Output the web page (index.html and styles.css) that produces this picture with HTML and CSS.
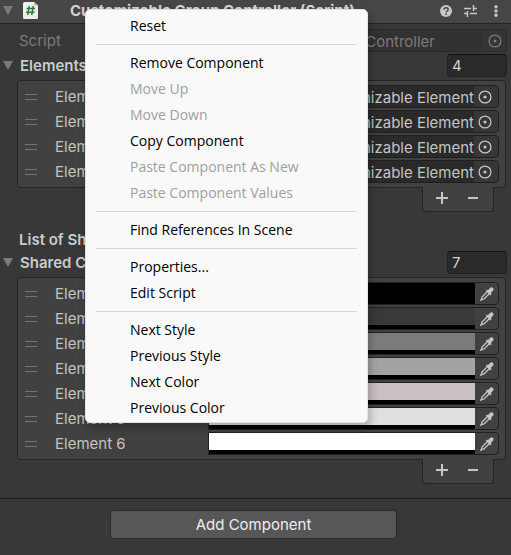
FILE: index.html
```html
<!DOCTYPE html>
<html lang="en">
<head>
<meta charset="utf-8">
<title>Inspector</title>
<link rel="stylesheet" href="styles.css">
</head>
<body>
<svg class="defs" aria-hidden="true">
  <symbol id="fold" viewBox="0 0 10 9"><path d="M0 0h10L5 9z" fill="#7b7b7b"/></symbol>
  <symbol id="grip" viewBox="0 0 12 6"><path d="M0 .5h12M0 5.500h12" stroke="#747474"/></symbol>
  <symbol id="target" viewBox="0 0 14 14"><circle cx="7" cy="7" r="5.900" fill="none" stroke="currentColor" stroke-width="1.300"/><circle cx="7" cy="7" r="1.600" fill="currentColor"/></symbol>
  <symbol id="dropper" viewBox="0 0 14 14"><path d="M7.800 3.300l2.200-2.200C11 .2 12.200.1 13 .9s.8 2-.1 2.900l-2.100 2.200.9.900-1.500 1.500-4.500-4.600L7.100 2.400z" fill="#c6c6c6"/><path d="M7 5L2 10l-.6 2.600L4 12l5-5" fill="none" stroke="#c6c6c6" stroke-width="1.300"/><path d="M0 14l.4-2 1.600 1.600z" fill="#c6c6c6"/></symbol>
  <symbol id="plus" viewBox="0 0 12 12"><path d="M0 6h12M6 0v12" stroke="#c6c6c6" stroke-width="2"/></symbol>
  <symbol id="minus" viewBox="0 0 12 12"><path d="M1 6h10" stroke="#c6c6c6" stroke-width="2"/></symbol>
</svg>
<main class="inspector">
  <header class="head">
    <svg class="fold"><use href="#fold"/></svg>
    <svg class="script-icon" viewBox="0 0 15 17"><path d="M1.500 0H11l4 3.500v12a1.500 1.500 0 0 1-1.500 1.500h-12A1.500 1.500 0 0 1 0 15.500v-14A1.500 1.500 0 0 1 1.500 0z" fill="#eee"/><path d="M11 0v3.500h4z" fill="#bbb"/><path d="M6.300 4L4.700 13M10.300 4L8.700 13M3.500 6.600h8.500M3 10.300h8.500" stroke="#2f7a35" stroke-width="1.500"/></svg>
    <h1 class="title">Customizable Group Controller (Script)</h1>
    <div class="tools">
      <button class="tool" aria-label="Help"><svg class="help" viewBox="0 0 12 12"><circle cx="6" cy="6" r="6" fill="#c8c8c8"/><path d="M4 4.700C4 2 8.200 2.200 8.200 4.500 8.200 6 6.200 6 6.200 7.600" fill="none" stroke="#444" stroke-width="1.400"/><rect x="5.400" y="8.500" width="1.500" height="1.500" fill="#444"/></svg></button>
      <button class="tool" aria-label="Presets"><svg class="preset" viewBox="0 0 13 12"><path d="M0 3.500h7M10 3.500h3M9.500 0v6M0 8.500h3M6 8.500h7M3.500 6v6" stroke="#c8c8c8" stroke-width="1.500" fill="none"/></svg></button>
      <button class="tool" aria-label="More"><svg class="more" viewBox="0 0 4 12"><circle cx="2" cy="1.700" r="1.700"/><circle cx="2" cy="6" r="1.700"/><circle cx="2" cy="10.300" r="1.700"/></svg></button>
    </div>
  </header>

  <div class="script-row">
    <span class="script-label">Script</span>
    <div class="object dim"><span class="object-name">CustomizableGroupController</span><button class="pick" aria-label="Pick script" disabled><svg><use href="#target"/></svg></button></div>
  </div>

  <section>
    <div class="list-head"><svg class="fold"><use href="#fold"/></svg><label class="strong" for="n1">Elements</label><input class="count" id="n1" value="4"></div>
    <div class="list">
      <div class="row"><svg class="grip"><use href="#grip"/></svg><span class="name">Element 0</span><div class="object"><span class="object-name end">Customizable Element</span><button class="pick" aria-label="Pick"><svg><use href="#target"/></svg></button></div></div>
      <div class="row"><svg class="grip"><use href="#grip"/></svg><span class="name">Element 1</span><div class="object"><span class="object-name end">Customizable Element</span><button class="pick" aria-label="Pick"><svg><use href="#target"/></svg></button></div></div>
      <div class="row"><svg class="grip"><use href="#grip"/></svg><span class="name">Element 2</span><div class="object"><span class="object-name end">Customizable Element</span><button class="pick" aria-label="Pick"><svg><use href="#target"/></svg></button></div></div>
      <div class="row"><svg class="grip"><use href="#grip"/></svg><span class="name">Element 3</span><div class="object"><span class="object-name end">Customizable Element</span><button class="pick" aria-label="Pick"><svg><use href="#target"/></svg></button></div></div>
    </div>
    <div class="list-foot"><button class="step" aria-label="Add"><svg><use href="#plus"/></svg></button><button class="step" aria-label="Remove"><svg><use href="#minus"/></svg></button></div>
  </section>

  <h2 class="group-title">List of Shared</h2>
  <section>
    <div class="list-head"><svg class="fold"><use href="#fold"/></svg><label class="strong" for="n2">Shared Colors</label><input class="count" id="n2" value="7"></div>
    <div class="list">
      <div class="row"><svg class="grip"><use href="#grip"/></svg><span class="name">Element 0</span><div class="color"><button class="swatch c0" aria-label="Color 0"></button><button class="pick" aria-label="Sample"><svg><use href="#dropper"/></svg></button></div></div>
      <div class="row"><svg class="grip"><use href="#grip"/></svg><span class="name">Element 1</span><div class="color"><button class="swatch c1" aria-label="Color 1"></button><button class="pick" aria-label="Sample"><svg><use href="#dropper"/></svg></button></div></div>
      <div class="row"><svg class="grip"><use href="#grip"/></svg><span class="name">Element 2</span><div class="color"><button class="swatch c2" aria-label="Color 2"></button><button class="pick" aria-label="Sample"><svg><use href="#dropper"/></svg></button></div></div>
      <div class="row"><svg class="grip"><use href="#grip"/></svg><span class="name">Element 3</span><div class="color"><button class="swatch c3" aria-label="Color 3"></button><button class="pick" aria-label="Sample"><svg><use href="#dropper"/></svg></button></div></div>
      <div class="row"><svg class="grip"><use href="#grip"/></svg><span class="name">Element 4</span><div class="color"><button class="swatch c4" aria-label="Color 4"></button><button class="pick" aria-label="Sample"><svg><use href="#dropper"/></svg></button></div></div>
      <div class="row"><svg class="grip"><use href="#grip"/></svg><span class="name">Element 5</span><div class="color"><button class="swatch c5" aria-label="Color 5"></button><button class="pick" aria-label="Sample"><svg><use href="#dropper"/></svg></button></div></div>
      <div class="row"><svg class="grip"><use href="#grip"/></svg><span class="name">Element 6</span><div class="color"><button class="swatch c6" aria-label="Color 6"></button><button class="pick" aria-label="Sample"><svg><use href="#dropper"/></svg></button></div></div>
    </div>
    <div class="list-foot"><button class="step" aria-label="Add"><svg><use href="#plus"/></svg></button><button class="step" aria-label="Remove"><svg><use href="#minus"/></svg></button></div>
  </section>

  <footer class="foot"><button class="add">Add Component</button></footer>
</main>

<div class="menu" role="menu">
  <button role="menuitem">Reset</button>
  <hr>
  <button role="menuitem">Remove Component</button>
  <button role="menuitem" disabled>Move Up</button>
  <button role="menuitem" disabled>Move Down</button>
  <button role="menuitem">Copy Component</button>
  <button role="menuitem" disabled>Paste Component As New</button>
  <button role="menuitem" disabled>Paste Component Values</button>
  <hr>
  <button role="menuitem">Find References In Scene</button>
  <hr>
  <button role="menuitem">Properties...</button>
  <button role="menuitem">Edit Script</button>
  <hr>
  <button role="menuitem">Next Style</button>
  <button role="menuitem">Previous Style</button>
  <button role="menuitem">Next Color</button>
  <button role="menuitem">Previous Color</button>
</div>
</body>
</html>
```
FILE: styles.css
```css
* { box-sizing: border-box; }
body {
  margin: 0;
  min-height: 100vh;
  background: #383838;
  color: #c4c4c4;
  font: 15px/20px Inter, "Liberation Sans", sans-serif;
}
button, input { font: inherit; color: inherit; margin: 0; padding: 0; border: 0; background: none; }
svg { display: block; }
.defs { position: absolute; width: 0; height: 0; }

.head {
  display: flex;
  align-items: center;
  height: 24px;
  padding: 0 13px 2px 3px;
  background: #464646;
  border-bottom: 1px solid #242424;
}
.fold { width: 10px; height: 9px; flex: none; }
.script-icon { width: 15px; height: 17px; margin-left: 10px; }
.title { margin: 0 0 0 32px; font-size: 15px; font-weight: 700; line-height: 20px; color: #d2d2d2; white-space: nowrap; }
.tools { display: flex; align-items: center; gap: 12px; margin-left: auto; }
.help { width: 12px; height: 12px; }
.preset { width: 13px; height: 12px; }
.more { width: 4px; height: 12px; fill: #c8c8c8; }
.tools .tool:last-child { margin-left: 5px; }

.script-row { display: flex; align-items: center; padding: 5px 4px 2px 19px; color: #7b7b7b; }
.script-label { width: 184px; flex: none; }
.object, .color {
  display: flex;
  flex: 1;
  min-width: 0;
  height: 23px;
  border: 1px solid #202020;
  border-radius: 4px;
  background: #2a2a2a;
  overflow: hidden;
}
.object.dim { background: #323232; border-color: #2a2a2a; }
.object-name { flex: 1; min-width: 0; padding-left: 21px; overflow: hidden; white-space: nowrap; line-height: 23px; }
.object-name.end { display: flex; justify-content: flex-end; padding: 0; }
.pick { display: flex; align-items: center; justify-content: center; width: 23px; flex: none; background: #373737; }
.pick svg { width: 14px; height: 14px; }
.dim .pick { background: #353535; }
.row .object .pick { width: 24px; padding-right: 2px; }

.list-head { display: flex; align-items: center; padding: 0 4px 3px 3px; }
.strong { flex: 1; margin-left: 7px; font-weight: 600; color: #cbcbcb; }
.count {
  width: 60px;
  height: 23px;
  padding-left: 4px;
  border: 1px solid #202020;
  border-top-color: #101010;
  border-radius: 4px;
  background: #2a2a2a;
  color: #d2d2d2;
}
.list {
  display: grid;
  gap: 2px;
  margin: 0 5px 0 17px;
  padding: 4px 6px;
  border: 1px solid #242424;
  border-radius: 4px;
  background: #414141;
}
.row { display: flex; align-items: center; }
.grip { width: 12px; height: 6px; margin-left: 1px; }
.name { width: 171px; padding-left: 18px; flex: none; line-height: 23px; }
.list-foot {
  display: flex;
  justify-content: space-between;
  width: 72px;
  height: 25px;
  margin: -1px 17px 0 auto;
  padding: 0 14px 2px 13px;
  position: relative;
  border: 1px solid #242424;
  border-top: 0;
  border-radius: 0 0 4px 4px;
  background: #414141;
}
.step { display: flex; align-items: center; }
.step svg { width: 12px; height: 12px; }
.color { border-radius: 0 4px 4px 0; }
.color .pick { background: #414141; }
.swatch { flex: 1; border-bottom: 4px solid #000; border-radius: 0; }
.c0 { background: #000; }
.c1 { background: #393939; }
.c2 { background: #7d7a7b; }
.c3 { background: #a4a3a3; }
.c4 { background: #c8c0c1; }
.c5 { background: #e2dedf; }
.c6 { background: #fff; }
.group-title { margin: 18px 0 1px 19px; font-size: 15px; line-height: 20px; font-weight: 600; color: #cbcbcb; }

.foot { display: flex; justify-content: center; margin-top: 14px; padding: 11px 4px 15px 0; border-top: 1px solid #1d1d1d; }
.add { width: 287px; max-width: 100%; height: 29px; border: 1px solid #2c2c2c; border-radius: 4px; background: #575757; color: #eee; }

.menu {
  position: absolute;
  left: 85px;
  top: 9px;
  width: 283px;
  padding: 3px 0 1px;
  border: 1px solid #e2e2e2;
  border-radius: 5px;
  background: #f9f9f9;
  box-shadow: 2px 5px 8px rgba(0, 0, 0, .25);
  color: #000;
  font: 14px/26px "Open Sans", "Noto Sans", sans-serif;
}
.menu button { display: block; width: 100%; padding-left: 44px; text-align: left; }
.menu button:disabled { color: #a0a0a0; }
.menu hr { height: 1px; margin: 5px 10px; border: 0; background: #d7d7d7; }
```
